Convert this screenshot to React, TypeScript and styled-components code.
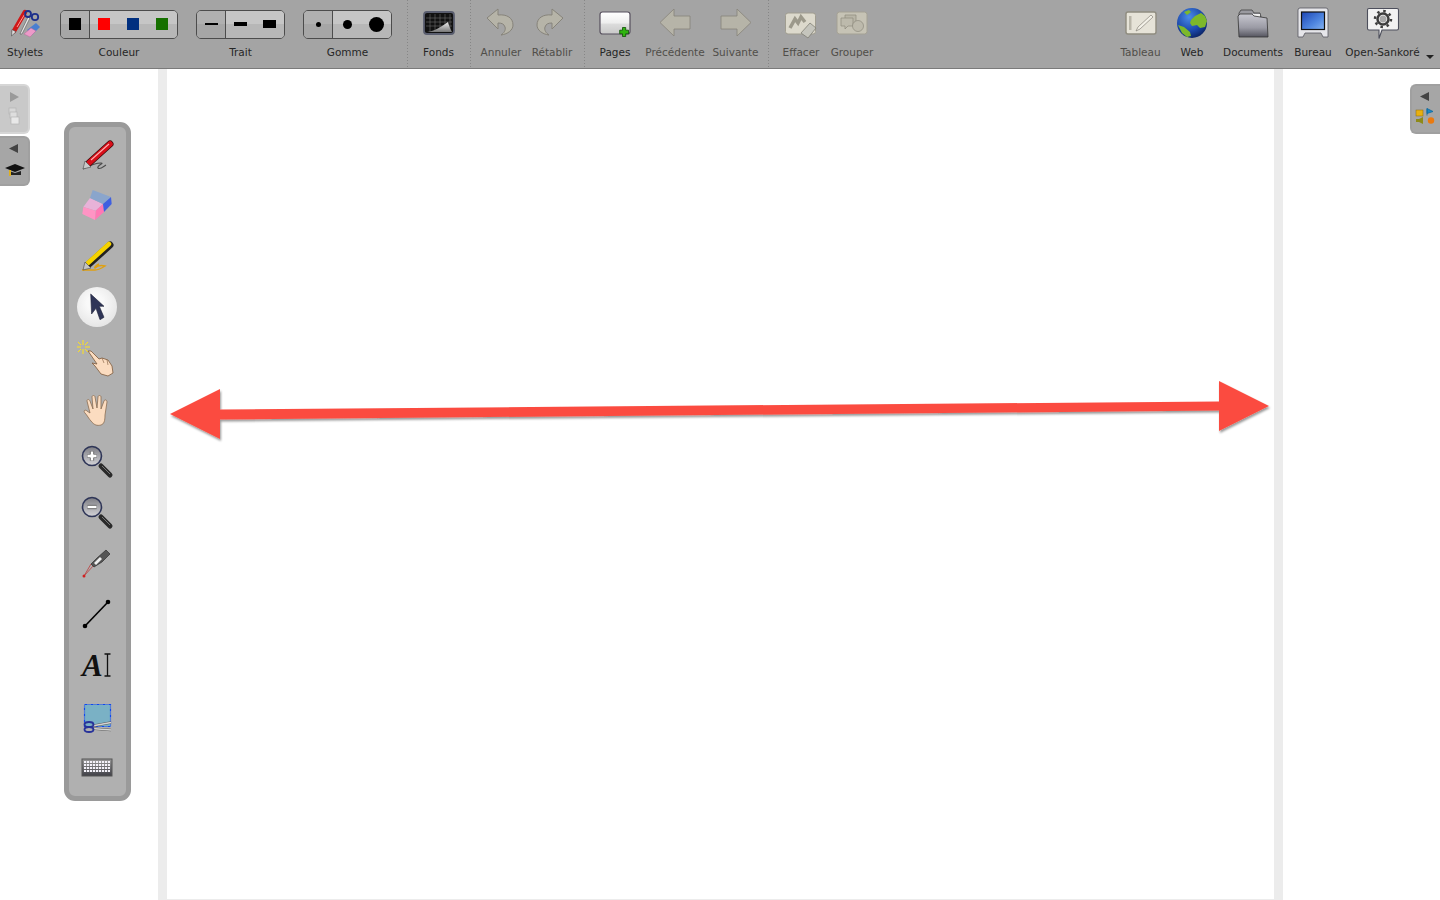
import React from "react";
import styled, { createGlobalStyle } from "styled-components";

const GlobalStyle = createGlobalStyle`
  html, body {
    margin: 0;
    padding: 0;
    background: #fff;
    font-family: "DejaVu Sans", "Open Sans", sans-serif;
  }
`;

const Page = styled.div`
  position: relative;
  width: 1440px;
  height: 900px;
  overflow: hidden;
  display: flex;
  flex-direction: column;
`;

const Toolbar = styled.header`
  display: flex;
  align-items: stretch;
  height: 68px;
  flex-shrink: 0;
  padding-right: 13px;
  background: #a4a4a4;
  border-bottom: 1px solid #7a7a7a;
`;

const Spacer = styled.div`
  flex: 1;
`;

const Separator = styled.div<{ $ml: number }>`
  width: 1px;
  margin-left: ${(p) => p.$ml}px;
  background: linear-gradient(#868686 1px, transparent 1px) 0 0 / 1px 3px repeat-y;
`;

const Tool = styled.div<{ $w: number }>`
  position: relative;
  width: ${(p) => p.$w}px;
  flex-shrink: 0;
  display: flex;
  flex-direction: column;
  align-items: center;
  padding-top: 7px;
  box-sizing: border-box;
`;

const ToolIcon = styled.svg`
  display: block;
  width: 40px;
  height: 32px;
  flex-shrink: 0;
`;

const Label = styled.span<{ $off?: boolean }>`
  margin-top: 6px;
  font-size: 10.5px;
  line-height: 14px;
  white-space: nowrap;
  color: ${(p) => (p.$off ? "#504e49" : "#262626")};
`;

const MenuCaret = styled.span`
  position: absolute;
  right: -7px;
  top: 55px;
  width: 0;
  height: 0;
  border-left: 4.5px solid transparent;
  border-right: 4.5px solid transparent;
  border-top: 4.5px solid #222;
`;

const Group = styled.div<{ $ml: number }>`
  margin-left: ${(p) => p.$ml}px;
  padding-top: 10px;
  display: flex;
  flex-direction: column;
  align-items: center;
`;

const Segmented = styled.div`
  display: flex;
  height: 29px;
  box-sizing: border-box;
  border: 1px solid #4c4c4c;
  border-radius: 5px;
  overflow: hidden;
`;

const Segment = styled.div<{ $on?: boolean }>`
  width: 29px;
  box-sizing: border-box;
  padding: 0 1px 1px 0;
  display: flex;
  align-items: center;
  justify-content: center;
  background: ${(p) =>
    p.$on
      ? "linear-gradient(#b0b0b0 50%, #a6a6a6 50%)"
      : "linear-gradient(#c6c6c6 50%, #b7b7b7 50%)"};
  box-shadow: ${(p) => (p.$on ? "inset -1px 0 0 #4c4c4c" : "none")};
`;

const Swatch = styled.span<{ $c: string }>`
  width: 12px;
  height: 12px;
  background: ${(p) => p.$c};
`;

const Stroke = styled.span<{ $h: number }>`
  width: 13px;
  height: ${(p) => p.$h}px;
  background: #000;
`;

const Dot = styled.span<{ $d: number }>`
  width: ${(p) => p.$d}px;
  height: ${(p) => p.$d}px;
  border-radius: 50%;
  background: #000;
`;

const Main = styled.main`
  flex: 1;
  display: flex;
`;

const Board = styled.div`
  width: 1125px;
  margin-left: 158px;
  box-sizing: border-box;
  background: #fff;
  border-left: 9px solid #ececec;
  border-right: 9px solid #ececec;
  border-bottom: 1px solid #ececec;
`;

const SideTab = styled.div<{ $top: number; $right?: boolean; $dim?: boolean }>`
  position: absolute;
  top: ${(p) => p.$top}px;
  ${(p) => (p.$right ? "right: 0;" : "left: 0;")}
  width: 30px;
  height: 50px;
  box-sizing: border-box;
  background: ${(p) => (p.$dim ? "#c9c9c9" : "#a6a6a6")};
  border: 2px solid ${(p) => (p.$dim ? "#d6d6d6" : "#a0a0a0")};
  ${(p) => (p.$right ? "border-right: 0;" : "border-left: 0;")}
  border-radius: ${(p) => (p.$right ? "6px 0 0 6px" : "0 6px 6px 0")};
  display: flex;
`;

const SideIcon = styled.svg`
  display: block;
  width: 28px;
  height: 46px;
`;

const Palette = styled.nav`
  position: absolute;
  left: 64px;
  top: 122px;
  width: 67px;
  height: 679px;
  box-sizing: border-box;
  padding: 1.5px 1px 0 0;
  background: #b0b0b0;
  border: 5px solid #9a9a9a;
  border-radius: 11px;
  display: flex;
  flex-direction: column;
  align-items: center;
`;

const PaletteItem = styled.div<{ $active?: boolean }>`
  position: relative;
  height: 51.15px;
  width: 40px;
  flex-shrink: 0;
  display: flex;
  align-items: center;
  justify-content: center;
  &::before {
    content: "";
    display: ${(p) => (p.$active ? "block" : "none")};
    position: absolute;
    left: 0;
    top: 5.5px;
    width: 40px;
    height: 40px;
    border-radius: 50%;
    background: radial-gradient(circle at 45% 40%, #f9f9f9 25%, #dcdcdc 100%);
  }
`;

const PaletteIcon = styled.svg`
  position: relative;
  display: block;
  width: 40px;
  height: 40px;
`;

const PaletteText = styled.text`
  font-family: "Liberation Serif", serif;
  font-style: italic;
  font-weight: bold;
  font-size: 31px;
  fill: #111;
`;

const ArrowLayer = styled.svg`
  position: absolute;
  left: 0;
  top: 0;
  width: 1440px;
  height: 900px;
  pointer-events: none;
`;

const tan = "#b6b4a8";
const tanEdge = "#86837a";

const StyletsIcon = () => (
  <>
    <path d="M9 24L20 5" stroke="#d01818" strokeWidth="4.5" strokeLinecap="round" />
    <path d="M12 20L21 5" stroke="#ff9a9a" strokeWidth="1" />
    <path d="M6.5 29l.5-6.500 4 2.300z" fill="#ddd" stroke="#444" strokeWidth="0.6" />
    <path d="M15 27l8-17 2 1-8 16z" fill="#e8e8e8" stroke="#555" strokeWidth="0.6" />
    <circle cx="23" cy="7" r="3" fill="none" stroke="#1c2f8c" strokeWidth="1.8" />
    <circle cx="30" cy="10" r="3.2" fill="none" stroke="#1c2f8c" strokeWidth="1.8" />
    <path d="M22 23l9-7 4 4-8 8z" fill="#4a7fd0" />
    <path d="M19 27l7-6 5 3-6 6z" fill="#ec9ac8" stroke="#b36c96" strokeWidth="0.5" />
  </>
);

const FondsIcon = () => (
  <>
    <defs>
      <linearGradient id="curl" x1="0" y1="0" x2="0" y2="1">
        <stop offset="0" stopColor="#eee" />
        <stop offset="1" stopColor="#777" />
      </linearGradient>
    </defs>
    <rect x="5" y="5" width="30" height="22" rx="3" fill="#111" stroke="#5b5f70" strokeWidth="1.8" />
    <path
      d="M7 11h26M7 15h26M7 19h26M11 7v18M16 7v18M21 7v18M26 7v18M31 7v18"
      stroke="#6c6c6c"
      strokeWidth="0.6"
    />
    <path d="M8 25c8-1 14-5 21-10 1 3 2 7 4 10z" fill="url(#curl)" />
  </>
);

const UndoPath = "M6 11L17 2v6c9-1 15 3 15 10 0 5-5 9-12 10 3-2 5-5 4-8-1-3-3-4-7-4v6z";

const AnnulerIcon = () => <path d={UndoPath} fill={tan} stroke={tanEdge} strokeWidth="1" />;

const RetablirIcon = () => (
  <path d={UndoPath} transform="matrix(-1 0 0 1 37 0)" fill={tan} stroke={tanEdge} strokeWidth="1" />
);

const PagesIcon = () => (
  <>
    <defs>
      <linearGradient id="sheet" x1="0" y1="0" x2="0" y2="1">
        <stop offset="0" stopColor="#fff" />
        <stop offset="0.5" stopColor="#eee" />
        <stop offset="0.55" stopColor="#dcdcdc" />
        <stop offset="1" stopColor="#c8c8c8" />
      </linearGradient>
    </defs>
    <rect x="5" y="5" width="30" height="22" rx="2.5" fill="url(#sheet)" stroke="#57505e" strokeWidth="1.2" />
    <path
      d="M27.5 20.500h3.200v2.700h2.800v3.600h-2.800v2.700h-3.200v-2.700h-2.800v-3.600h2.800z"
      fill="#2fb50f"
      stroke="#0d4d05"
      strokeWidth="0.8"
    />
  </>
);

const ArrowShape = "M5 15.500L19 2v7h16v13H19v7z";

const PrecedenteIcon = () => <path d={ArrowShape} fill={tan} stroke={tanEdge} strokeWidth="0.8" />;

const SuivanteIcon = () => (
  <path d={ArrowShape} transform="matrix(-1 0 0 1 40 0)" fill={tan} stroke={tanEdge} strokeWidth="0.8" />
);

const EffacerIcon = () => (
  <>
    <rect x="4.5" y="6" width="30" height="21" rx="2.5" fill="#dcd9cc" stroke="#a09d90" />
    <path d="M9 21l5-9 3 4 3-6 4 5" fill="none" stroke="#9c998b" strokeWidth="3.5" />
    <path d="M20 26l9-10 6 5-8 10z" fill="#c5c5bd" stroke="#77756c" strokeWidth="0.7" />
  </>
);

const GrouperIcon = () => (
  <>
    <rect x="5" y="5" width="30" height="22" rx="2.5" fill="#c6c3b5" stroke="#a4a194" />
    <path d="M13 8h11v9h-7l-2 2v-2h-2z" fill="#b8b5a7" stroke="#8d8a7d" strokeWidth="0.7" />
    <path d="M9 11h12v8h-5l-3 3v-3H9z" fill="#bdbaac" stroke="#8d8a7d" strokeWidth="0.7" />
    <circle cx="26" cy="19" r="5.5" fill="#bdbaac" stroke="#8d8a7d" strokeWidth="0.7" />
  </>
);

const TableauIcon = () => (
  <>
    <rect x="5" y="5" width="30" height="22" rx="2" fill="#e6e3d8" stroke="#8f8c7f" strokeWidth="1.4" />
    <rect x="8" y="9" width="2.5" height="14" fill="#b9b6a9" />
    <path d="M15 24l2-4L30 8l2 2-13 12z" fill="#f3f1e8" stroke="#86837a" strokeWidth="0.7" />
  </>
);

const WebIcon = () => (
  <>
    <defs>
      <radialGradient id="globe" cx="0.4" cy="0.3" r="0.8">
        <stop offset="0" stopColor="#4a8be8" />
        <stop offset="0.6" stopColor="#1a46a8" />
        <stop offset="1" stopColor="#081a50" />
      </radialGradient>
    </defs>
    <circle cx="20" cy="16" r="15" fill="url(#globe)" />
    <path
      d="M19 13l4-4 6-3 4 3 2 5-2 6-5 1-3-3-5 1-2-3zM6 18l6 2 6 5 1 4-4 1-5-4zM12 5l5-2 2 2-4 3z"
      fill="#7db82a"
    />
  </>
);

const DocumentsIcon = () => (
  <>
    <defs>
      <linearGradient id="folder" x1="0" y1="0" x2="0" y2="1">
        <stop offset="0" stopColor="#c8c8d0" />
        <stop offset="0.6" stopColor="#9a9aa4" />
        <stop offset="1" stopColor="#55555f" />
      </linearGradient>
    </defs>
    <path d="M6 6l2-3h11l2 3h6l1 4H6z" fill="#9a9aa0" stroke="#333" strokeWidth="0.7" />
    <path d="M7 7h20v6H7z" fill="#eee" />
    <path d="M5 9l2-2h12l2 2 13 2 1 19H6z" fill="url(#folder)" stroke="#333" strokeWidth="0.8" />
  </>
);

const BureauIcon = () => (
  <>
    <defs>
      <linearGradient id="screen" x1="0" y1="0" x2="1" y2="1">
        <stop offset="0" stopColor="#1d45b4" />
        <stop offset="0.6" stopColor="#4f86e0" />
        <stop offset="1" stopColor="#86b3f0" />
      </linearGradient>
    </defs>
    <path d="M5 3q0-2 2-2h26q2 0 2 2v27h-5l-2-4H12l-2 4H5z" fill="#e6e6ea" stroke="#57575f" strokeWidth="0.8" />
    <rect x="8.5" y="5" width="23" height="17.5" fill="url(#screen)" stroke="#101010" strokeWidth="1.2" />
  </>
);

const SankoreIcon = () => (
  <>
    <path
      d="M6 1.500h28q1.500 0 1.500 1.500v18.500q0 1.500-1.500 1.500H19l-3 8.500V23H6q-1.500 0-1.500-1.500V3Q4.500 1.500 6 1.500z"
      fill="#f2f2f2"
      stroke="#4d4f5c"
      strokeWidth="1.1"
    />
    <circle cx="20" cy="12" r="5.5" fill="none" stroke="#3d3d3d" strokeWidth="2.5" />
    <circle cx="20" cy="12" r="8" fill="none" stroke="#3d3d3d" strokeWidth="2.5" strokeDasharray="2.5 3.78" />
    <circle cx="20" cy="12" r="3.5" fill="#a8a8a8" />
  </>
);

const PenIcon = () => (
  <g transform="translate(0 2)">
    <path d="M6 33c6-3 11-6 18-6 4 0-5 3-3 5s6-2 8-3" fill="none" stroke="#4a4a4a" strokeWidth="1.1" />
    <path d="M12 27L33 8" stroke="#3a0a0a" strokeWidth="7" strokeLinecap="round" />
    <path d="M12 27L33 8" stroke="#d80f1a" strokeWidth="5.5" strokeLinecap="round" />
    <path d="M14 24L32 8" stroke="#ffb0b0" strokeWidth="1.2" />
    <path d="M6 33l2-8 6 6z" fill="#c9c9c9" stroke="#444" strokeWidth="0.6" />
  </g>
);

const EraserIcon = () => (
  <>
    <path d="M6.3 22L13 13l13 6-7.300 6.700z" fill="#e8b2d8" />
    <path d="M13 13l2.700-8L34 12l-8 7z" fill="#8aa5cc" />
    <path d="M18.700 25.700L26 19l1 8-9 8z" fill="#ff78b4" />
    <path d="M26 19l8-7 .7 7-7.700 8z" fill="#3f5fe0" />
    <path d="M6.3 22l12.400 3.700L18 35 5.300 29z" fill="#ff94c4" />
  </>
);

const HighlighterIcon = () => (
  <g transform="translate(0 1)">
    <path d="M5 33h13c4 0 7-2 10-4-4-1-8 0-10 2-1-1 2-3 4-4" fill="none" stroke="#e0a010" strokeWidth="1.5" />
    <path d="M12 27L33 8" stroke="#222" strokeWidth="7" strokeLinecap="round" />
    <path d="M11 26L32 7" stroke="#f5d200" strokeWidth="4.5" strokeLinecap="round" />
    <path d="M6 33l2-8 6 6z" fill="#c4c4c4" stroke="#444" strokeWidth="0.6" />
  </g>
);

const PointerIcon = () => (
  <path d="M13.700 7l.9 20 4.400-5.700 4 11.400 4-2.400-4.700-11h4.700z" fill="#2f3557" stroke="#1e2238" strokeWidth="0.6" />
);

const LaserHandIcon = () => (
  <>
    <path
      d="M6 1v5M6 10v5M-1 8h5M8 8h5M1 3l3 3M8 10l3 3M11 3L8 6M4 10l-3 3"
      stroke="#ffe21a"
      strokeWidth="1"
    />
    <path
      d="M11 12l3 0 8 8 3-1 6 2 4 6 1 7-5 3-7-2-6-8-3-3 5 1z"
      fill="#fbdcc0"
      stroke="#7d5a3c"
      strokeWidth="0.8"
    />
    <path d="M25 19l2 5M30 21l1 5" stroke="#7d5a3c" strokeWidth="0.6" />
  </>
);

const HandIcon = () => (
  <path
    d="M14 31c-2-2-4-6-6-8-2-2 0-4 2-2l3 2-3-12c0-2 2-2 3 0l3 8-1-12c0-2 3-2 3 0l2 11 1-11c0-2 3-2 3 0l0 12 3-8c1-2 3-1 3 1l-2 13c0 6-1 9-4 10-4 1-7 0-10-4z"
    fill="#fbdcc0"
    stroke="#8b6d52"
    strokeWidth="0.8"
  />
);

const Magnifier = ({ minus }: { minus?: boolean }) => {
  const mark = minus ? "M10.5 15h9" : "M10.5 15h9M15 10.5v9";
  const lens = minus ? "lensOut" : "lensIn";
  return (
    <>
      <defs>
        <linearGradient id={lens} x1="0" y1="0" x2="0" y2="1">
          <stop offset="0" stopColor="#7c7c82" />
          <stop offset="1" stopColor="#d4d4d8" />
        </linearGradient>
      </defs>
      <path d="M24 25l9 9" stroke="#2a2a2a" strokeWidth="5" strokeLinecap="round" />
      <path d="M25 25l8 8" stroke="#777" strokeWidth="1" />
      <circle cx="15" cy="15" r="9.5" fill={`url(#${lens})`} stroke="#2e3557" strokeWidth="1.6" />
      <path d={mark} stroke="#333" strokeWidth="4.2" />
      <path d={mark} stroke="#fff" strokeWidth="2.8" />
    </>
  );
};

const ZoomInIcon = () => <Magnifier />;
const ZoomOutIcon = () => <Magnifier minus />;

const LaserIcon = () => (
  <>
    <path d="M7 33l10-11M7 33l7-12" stroke="#c02020" strokeWidth="0.8" opacity="0.8" />
    <circle cx="7" cy="33" r="1.5" fill="#d02020" />
    <path d="M17 24l-3-3 6-6 9-8 4 4-8 8z" fill="#555" stroke="#222" strokeWidth="0.6" />
    <path d="M17 20l6-6 2 2-6 6z" fill="#eee" />
  </>
);

const LineIcon = () => (
  <>
    <path d="M8 32L31 8" stroke="#000" strokeWidth="1.6" />
    <circle cx="8" cy="32" r="2.3" fill="#000" />
    <circle cx="31" cy="8" r="2.3" fill="#000" />
  </>
);

const TextIcon = () => (
  <>
    <PaletteText x="5" y="31">
      A
    </PaletteText>
    <path d="M27.5 9h6M30.5 9v22M27.5 31h6" stroke="#111" strokeWidth="1.3" fill="none" />
  </>
);

const CaptureIcon = () => (
  <>
    <rect x="7.5" y="7.5" width="26" height="22" fill="#7ab1c5" stroke="#1048f0" strokeWidth="1.2" strokeDasharray="3 1 1 1" />
    <path d="M15 29L34 25.500M15 31.500L34 33" stroke="#5c5c5c" strokeWidth="2.6" />
    <path d="M15 29L34 25.500M15 31.500L34 33" stroke="#d4d4d4" strokeWidth="1.3" />
    <ellipse cx="12" cy="27.500" rx="4.5" ry="2.5" fill="none" stroke="#27329a" strokeWidth="1.8" />
    <ellipse cx="12" cy="32.500" rx="4.5" ry="2.5" fill="none" stroke="#27329a" strokeWidth="1.8" />
  </>
);

const KeyboardIcon = () => (
  <>
    <defs>
      <linearGradient id="keys" x1="0" y1="0" x2="0" y2="1">
        <stop offset="0" stopColor="#9a9a9a" />
        <stop offset="1" stopColor="#3f3f46" />
      </linearGradient>
    </defs>
    <rect x="5" y="11" width="30" height="17" fill="url(#keys)" stroke="#555" />
    <path d="M7 14h26M7 17h26M7 20h26M7 23h26" stroke="#f4f2fa" strokeWidth="1.8" strokeDasharray="2.2 0.8" />
  </>
);

type ToolDef = { label: string; w: number; icon: React.FC; off?: boolean };

const renderTool = ({ label, w, icon: Icon, off }: ToolDef) => (
  <Tool key={label} $w={w}>
    <ToolIcon viewBox="0 0 40 32">
      <Icon />
    </ToolIcon>
    <Label $off={off}>{label}</Label>
    {label === "Open-Sankoré" && <MenuCaret />}
  </Tool>
);

const historyTools: ToolDef[] = [
  { label: "Annuler", w: 60, icon: AnnulerIcon, off: true },
  { label: "Rétablir", w: 42, icon: RetablirIcon, off: true },
];

const pageTools: ToolDef[] = [
  { label: "Pages", w: 60, icon: PagesIcon },
  { label: "Précédente", w: 60, icon: PrecedenteIcon, off: true },
  { label: "Suivante", w: 61, icon: SuivanteIcon, off: true },
];

const editTools: ToolDef[] = [
  { label: "Effacer", w: 64, icon: EffacerIcon, off: true },
  { label: "Grouper", w: 38, icon: GrouperIcon, off: true },
];

const rightTools: ToolDef[] = [
  { label: "Tableau", w: 51, icon: TableauIcon, off: true },
  { label: "Web", w: 52, icon: WebIcon },
  { label: "Documents", w: 70, icon: DocumentsIcon },
  { label: "Bureau", w: 50, icon: BureauIcon },
  { label: "Open-Sankoré", w: 89, icon: SankoreIcon },
];

const paletteTools: { key: string; icon: React.FC; active?: boolean }[] = [
  { key: "pen", icon: PenIcon },
  { key: "eraser", icon: EraserIcon },
  { key: "marker", icon: HighlighterIcon },
  { key: "pointer", icon: PointerIcon, active: true },
  { key: "play", icon: LaserHandIcon },
  { key: "hand", icon: HandIcon },
  { key: "zoomin", icon: ZoomInIcon },
  { key: "zoomout", icon: ZoomOutIcon },
  { key: "laser", icon: LaserIcon },
  { key: "line", icon: LineIcon },
  { key: "text", icon: TextIcon },
  { key: "capture", icon: CaptureIcon },
  { key: "keyboard", icon: KeyboardIcon },
];

const colors = ["#000", "#ff0000", "#002f7f", "#167000"];

const App = () => (
  <>
    <GlobalStyle />
    <Page>
      <Toolbar>
        {renderTool({ label: "Stylets", w: 50, icon: StyletsIcon })}
        <Group $ml={10}>
          <Segmented>
            {colors.map((c, i) => (
              <Segment key={c} $on={i === 0}>
                <Swatch $c={c} />
              </Segment>
            ))}
          </Segmented>
          <Label>Couleur</Label>
        </Group>
        <Group $ml={18}>
          <Segmented>
            {[2, 4, 8].map((h, i) => (
              <Segment key={h} $on={i === 0}>
                <Stroke $h={h} />
              </Segment>
            ))}
          </Segmented>
          <Label>Trait</Label>
        </Group>
        <Group $ml={18}>
          <Segmented>
            {[5, 9, 15].map((d, i) => (
              <Segment key={d} $on={i === 0}>
                <Dot $d={d} />
              </Segment>
            ))}
          </Segmented>
          <Label>Gomme</Label>
        </Group>
        <Separator $ml={15} />
        {renderTool({ label: "Fonds", w: 61, icon: FondsIcon })}
        <Separator $ml={1} />
        {historyTools.map(renderTool)}
        <Separator $ml={11} />
        {pageTools.map(renderTool)}
        <Separator $ml={2} />
        {editTools.map(renderTool)}
        <Spacer />
        {rightTools.map(renderTool)}
      </Toolbar>
      <Main>
        <Board />
      </Main>

      <SideTab $top={84} $dim>
        <SideIcon viewBox="0 0 28 46">
          <path d="M10 6l9 5-9 5z" fill="#9a9a9a" />
          <rect x="9" y="22" width="7" height="6" fill="#d8d8d8" stroke="#b4b4b4" strokeWidth="0.7" />
          <rect x="10" y="26" width="7" height="6" fill="#dedede" stroke="#b4b4b4" strokeWidth="0.7" />
          <rect x="11" y="31" width="8" height="7" fill="#e8e8e8" stroke="#b4b4b4" strokeWidth="0.7" />
        </SideIcon>
      </SideTab>
      <SideTab $top={136}>
        <SideIcon viewBox="0 0 28 46">
          <path d="M18 6v9l-9-4.500z" fill="#444" />
          <path d="M5 30l10-4 10 4-10 4z" fill="#111" />
          <path d="M9 33v4h12v-4l-6 2z" fill="#222" />
          <path d="M10 32v6" stroke="#e0b020" strokeWidth="2" />
        </SideIcon>
      </SideTab>
      <SideTab $top={84} $right>
        <SideIcon viewBox="0 0 28 46">
          <path d="M17 6v9l-9-4.500z" fill="#444" />
          <rect x="4" y="24" width="7" height="6" fill="#e8b010" stroke="#8a6a08" strokeWidth="0.5" />
          <path d="M15 22.500v7M15 22.500l6 3-6 2z" fill="#1a88c8" stroke="#0d6aa0" strokeWidth="0.8" />
          <path d="M4 33h3l4-2v7l-4-2H4z" fill="#8e8a18" />
          <circle cx="19" cy="34.500" r="3.2" fill="#ea7a10" />
        </SideIcon>
      </SideTab>

      <Palette>
        {paletteTools.map(({ key, icon: Icon, active }) => (
          <PaletteItem key={key} $active={active}>
            <PaletteIcon viewBox="0 0 40 40">
              <Icon />
            </PaletteIcon>
          </PaletteItem>
        ))}
      </Palette>

      <ArrowLayer viewBox="0 0 1440 900">
        <defs>
          <filter id="arrowShadow" x="-2%" y="-20%" width="104%" height="140%">
            <feDropShadow dx="1" dy="2" stdDeviation="1.2" floodColor="#000" floodOpacity="0.4" />
          </filter>
        </defs>
        <polygon
          points="170,414 220,389 220,409.500 1219,401.500 1219,381 1269,406 1219,431 1219,410.500 220,419.500 220,439"
          fill="#fb4c41"
          filter="url(#arrowShadow)"
        />
      </ArrowLayer>
    </Page>
  </>
);

export default App;
